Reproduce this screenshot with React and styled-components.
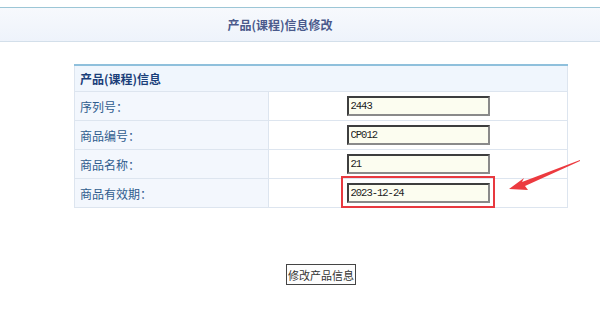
import React from "react";
import styled, { createGlobalStyle } from "styled-components";

const Global = createGlobalStyle`
  html, body { margin: 0; padding: 0; background: #fff; }
  body { font-family: "Noto Sans CJK SC", "Noto Sans", sans-serif; font-size: 12px; }
`;

const Page = styled.div`
  position: relative;
  width: 600px;
  height: 311px;
  padding-top: 7px;
  box-sizing: border-box;
  overflow: hidden;
`;

const Header = styled.div`
  height: 33px;
  border-top: 1px solid #9cc6d6;
  border-bottom: 1px solid #d3dfea;
  background: linear-gradient(#f7f9fd, #eef3fb);
  display: flex;
  align-items: center;
  justify-content: center;
  padding-right: 40px;
  color: #4b5a8c;
  font-weight: bold;
  font-size: 12px;
`;

const Content = styled.div`
  width: 494px;
  margin: 22px 0 0 74px;
  display: flex;
  flex-direction: column;
  align-items: center;
`;

const Table = styled.table`
  width: 100%;
  border-collapse: collapse;
  border-top: 2px solid #8fc0dc;
  border-left: 1px solid #dde5ef;
  border-right: 1px solid #dde5ef;
`;

const TitleCell = styled.th`
  height: 25px;
  padding: 0 5px;
  text-align: left;
  background: #f0f6fd;
  color: #1b3f7a;
  font-weight: bold;
  font-size: 12px;
  border-bottom: 1px solid #dde5ef;
`;

const LabelCell = styled.td`
  width: 183px;
  height: 28px;
  padding: 0 5px;
  background: #f3f7fd;
  color: #2f5c8e;
  border-bottom: 1px solid #dde5ef;
  border-right: 1px solid #dde5ef;
`;

const ValueCell = styled.td`
  height: 28px;
  padding: 0;
  text-align: center;
  border-bottom: 1px solid #dde5ef;
`;

const Input = styled.input`
  width: 143px;
  height: 20px;
  box-sizing: border-box;
  border-style: solid;
  border-width: 2px;
  border-color: #3e3e3e #8a8a8a #8a8a8a #3e3e3e;
  background: #fcfdf0;
  padding: 0 2px;
  font-family: "Liberation Mono", monospace;
  font-size: 10.5px;
  letter-spacing: -1px;
  color: #222;
  vertical-align: middle;
  outline: none;
`;

const Button = styled.button`
  margin-top: 56px;
  width: 70px;
  height: 21px;
  padding: 0;
  border: 1px solid #444;
  background: #fdfdfd;
  color: #333;
  font-family: "Noto Sans CJK SC", sans-serif;
  font-size: 11px;
  white-space: nowrap;
`;

const Highlight = styled.div`
  position: absolute;
  left: 341px;
  top: 176px;
  width: 154px;
  height: 32px;
  box-sizing: border-box;
  border: 2px solid #e8393f;
  pointer-events: none;
`;

const Arrow = styled.svg`
  position: absolute;
  left: 500px;
  top: 150px;
  overflow: visible;
`;

const rows = [
  ["序列号：", "2443"],
  ["商品编号：", "CP012"],
  ["商品名称：", "21"],
  ["商品有效期：", "2023-12-24"],
];

export default function App() {
  return (
    <>
      <Global />
      <Page>
        <Header>产品(课程)信息修改</Header>
        <Content>
          <Table>
            <thead>
              <tr>
                <TitleCell colSpan={2}>产品(课程)信息</TitleCell>
              </tr>
            </thead>
            <tbody>
              {rows.map(([label, value]) => (
                <tr key={label}>
                  <LabelCell>{label}</LabelCell>
                  <ValueCell>
                    <Input defaultValue={value} />
                  </ValueCell>
                </tr>
              ))}
            </tbody>
          </Table>
          <Button>修改产品信息</Button>
        </Content>
        <Highlight />
        <Arrow width="90" height="50" viewBox="0 0 90 50">
          <polygon points="80,10 22,32 24,28 9,39 28,40 25,36 80,11" fill="#ec3a3f" />
        </Arrow>
      </Page>
    </>
  );
}
